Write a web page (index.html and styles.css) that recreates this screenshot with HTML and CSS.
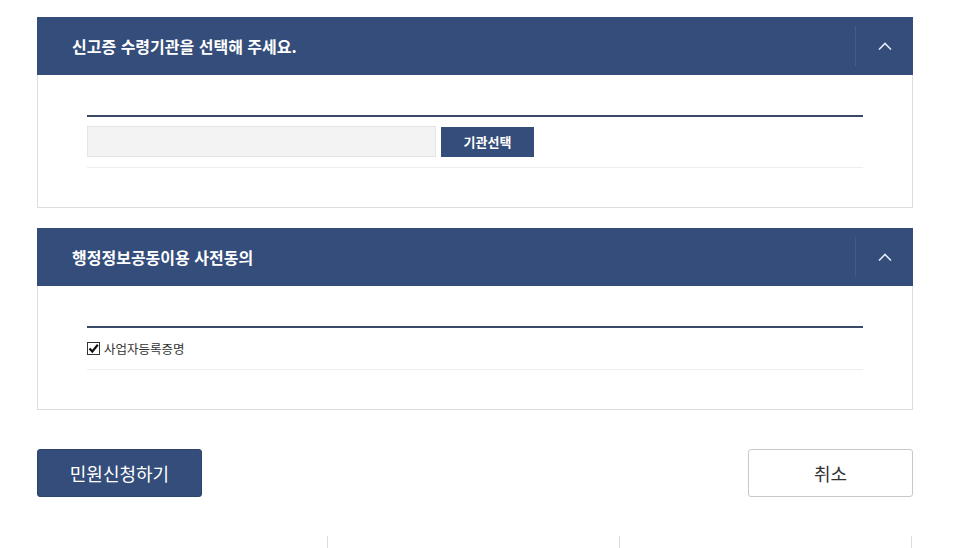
FILE: index.html
```
<!DOCTYPE html>
<html lang="ko">
<head>
    <meta charset="UTF-8">
    <meta name="viewport" content="width=device-width, initial-scale=1.0">
    <title>민원신청</title>
    <link rel="stylesheet" href="styles.css">
</head>
<body>
    <div class="wrap">
        <div class="panel">
            <div class="panel-head">
                <h3>신고증 수령기관을 선택해 주세요.</h3>
                <button class="toggle" type="button">
                    <svg width="14" height="8" viewBox="0 0 14 8"><path d="M1 7.5 L7 1.5 L13 7.5" fill="none" stroke="#e6ebf3" stroke-width="1.6"/></svg>
                </button>
            </div>
            <div class="panel-body">
                <div class="form-table">
                    <div class="form-row org-row">
                        <input class="org-input" type="text">
                        <button class="btn-org" type="button">기관선택</button>
                    </div>
                </div>
            </div>
        </div>

        <div class="panel">
            <div class="panel-head">
                <h3>행정정보공동이용 사전동의</h3>
                <button class="toggle" type="button">
                    <svg width="14" height="8" viewBox="0 0 14 8"><path d="M1 7.5 L7 1.5 L13 7.5" fill="none" stroke="#e6ebf3" stroke-width="1.6"/></svg>
                </button>
            </div>
            <div class="panel-body">
                <div class="form-table">
                    <div class="form-row check-row">
                        <span class="check">
                            <svg width="11" height="11" viewBox="0 0 11 11"><path d="M1.5 5.5 L4.3 8.5 L9.8 1.8" fill="none" stroke="#111" stroke-width="2.2"/></svg>
                        </span>
                        <label>사업자등록증명</label>
                    </div>
                </div>
            </div>
        </div>

        <div class="actions">
            <button class="btn btn-primary" type="button">민원신청하기</button>
            <button class="btn btn-cancel" type="button">취소</button>
        </div>

        <div class="footer-cols">
            <div class="col"></div>
            <div class="col"></div>
            <div class="col"></div>
        </div>
    </div>
</body>
</html>
```

FILE: styles.css
```
body {
    margin: 0;
    font-family: "Noto Sans CJK KR", "Noto Sans", sans-serif;
    background: #fff;
    color: #333;
}
.wrap {
    width: 876px;
    margin-left: 37px;
    padding-top: 17px;
}
.panel { margin-bottom: 20px; }
.panel-head {
    display: flex;
    align-items: center;
    height: 58px;
    background: #344d7a;
}
.panel-head h3 {
    flex: 1;
    margin: 0;
    padding-left: 35px;
    font-size: 16px;
    font-weight: 700;
    color: #fff;
}
.toggle {
    display: flex;
    align-items: center;
    justify-content: center;
    width: 58px;
    height: 40px;
    padding: 0;
    border: 0;
    border-left: 1px solid #435c88;
    background: transparent;
}
.panel-body {
    border: 1px solid #ddd;
    border-top: 0;
    padding: 40px 49px 39px 49px;
}
.form-table { border-top: 2px solid #3a4a66; }
.form-row {
    display: flex;
    align-items: center;
    border-bottom: 1px solid #eee;
}
.org-row { padding: 9px 0 10px; gap: 5px; }
.org-input {
    width: 349px;
    height: 31px;
    box-sizing: border-box;
    margin: 0;
    border: 1px solid #e4e4e4;
    background: #f3f3f3;
}
.btn-org {
    width: 93px;
    height: 30px;
    border: 0;
    background: #344d7a;
    color: #fff;
    font-family: inherit;
    font-size: 13px;
    font-weight: 700;
}
.check-row { padding: 12px 0; height: 17px; }
.check {
    display: flex;
    align-items: center;
    justify-content: center;
    width: 11px;
    height: 11px;
    border: 1px solid #333;
    margin-right: 4px;
}
.check-row label { font-size: 12.5px; color: #333; }
.actions {
    display: flex;
    justify-content: space-between;
    margin-top: 39px;
}
.btn {
    width: 165px;
    height: 48px;
    border-radius: 3px;
    font-family: inherit;
    font-size: 18px;
}
.btn-primary {
    border: 1px solid #2e446b;
    background: #344d7a;
    color: #fff;
}
.btn-cancel {
    border: 1px solid #c8c8c8;
    background: #fff;
    color: #333;
}
.footer-cols {
    display: flex;
    margin-top: 39px;
    height: 30px;
}
.col {
    width: 292px;
    border-right: 1px solid #ddd;
    box-sizing: border-box;
}
.col:first-child { width: 291px; }
```
